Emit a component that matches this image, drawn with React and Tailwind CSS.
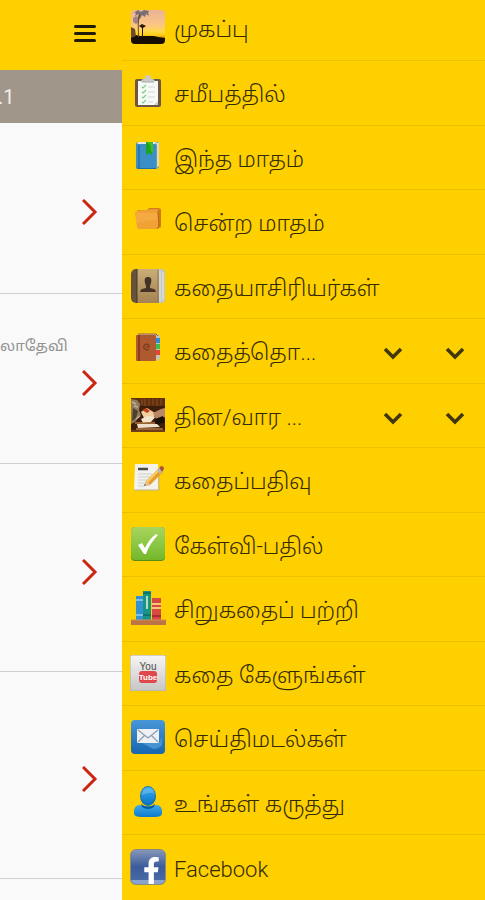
import React, { useState } from 'react';
import { FaFacebookF } from 'react-icons/fa';

const SunsetIcon = () => (
    <svg viewBox="0 0 36 36" className="size-9" aria-hidden="true">
        <defs>
            <linearGradient id="sunset" x1="0" y1="0" x2="0" y2="1">
                <stop offset="0" stopColor="#eab396" />
                <stop offset="0.45" stopColor="#fcc585" />
                <stop offset="0.62" stopColor="#ffd84a" />
                <stop offset="0.74" stopColor="#ffcf10" />
                <stop offset="0.82" stopColor="#d98a08" />
            </linearGradient>
            <clipPath id="sunsetClip"><rect x="1" y="1" width="34" height="34" rx="4" /></clipPath>
        </defs>
        <g clipPath="url(#sunsetClip)">
            <rect x="1" y="1" width="34" height="34" fill="url(#sunset)" />
            <path d="M1 28l5-2 4 1 4 0 5 0 5 0 4 1 7 1v9H1z" fill="#170d02" />
            <path d="M4 4l4-3 3 2 3-2 5 1-1 2 1 3-3-2-1 3-3-2-2 4-2-1 1-4-4 2 1-3z" fill="#7b6f73" />
            <path d="M3 9l3-2 3 2v4l-3 2-3-2z" fill="#a38781" />
            <path d="M9 5c-2 7-1 14-1 23h1c0-9-1-15 1-22z" fill="#5e4233" />
            <path d="M9 17l3-2 4 2-3 2v9h-1v-9z" fill="#2b1708" />
            <path d="M1 18l4 2 1 7-5 2z" fill="#6e4929" />
        </g>
    </svg>
);

const ClipboardIcon = () => (
    <svg viewBox="0 0 36 36" className="size-9" aria-hidden="true">
        <rect x="5" y="5" width="26" height="28" rx="2" fill="#6e5646" />
        <path d="M8 7h20v24H8z" fill="#f7f9f5" />
        <path d="M24 31l4-4v4z" fill="#cfcfc8" />
        <path d="M15 5q0-4 3-4t3 4h1q3 0 3 3H11q0-3 3-3z" fill="#c8cbca" />
        <path d="M12 8h12" stroke="#a5aaa8" strokeWidth="1" />
        <path d="M12 13l1 1 3-3M12 18l1 1 3-3M12 23l1 1 3-3M12 28l1 1 3-3" stroke="#7dcf87" strokeWidth="1.2" fill="none" />
        <path d="M18 13h7M18 18h7M18 23h7M18 28h5" stroke="#d3d7da" strokeWidth="1.2" />
    </svg>
);

const BlueBookIcon = () => (
    <svg viewBox="0 0 36 36" className="size-9" aria-hidden="true">
        <path d="M9 3h20v25l-3 2H8q-2 0-2-2V6q0-3 3-3z" fill="#1f6fa8" />
        <path d="M26 4l3-1v24l-3 3z" fill="#d5dcd5" />
        <path d="M6 5h20v24H8l-2-1z" fill="#3b8fc7" />
        <path d="M8 3h19l-2 2H7z" fill="#e3e8e2" />
        <path d="M26 6l1-1v24l-1 1z" fill="#7e9298" />
        <path d="M9 6v23" stroke="#286f9f" strokeWidth="1.5" />
        <path d="M16 3h6v13l-3-2-3 2z" fill="#1aa51d" />
        <path d="M17 3h6v11l-2-2-1-6z" fill="#45bd22" />
    </svg>
);

const FolderIcon = () => (
    <svg viewBox="0 0 36 36" className="size-9" aria-hidden="true">
        <path d="M7 9q0-2 2-2h8l2-2h9q3 0 3 2v16q0 2-2 2H9z" fill="#d47a16" />
        <path d="M9 7h8l2-1h9l1 3H9z" fill="#e89a35" />
        <path d="M5 10q0-2 2-2h19q2 0 2 2v14q0 2-2 2H9q-2 0-2-2z" fill="#f2a135" />
        <path d="M6 10h21v7q-10 0-21 3z" fill="#f7ad48" opacity="0.7" />
        <path d="M28 8l1 15-2 3" stroke="#b96914" fill="none" />
    </svg>
);

const ContactsIcon = () => (
    <svg viewBox="0 0 36 36" className="size-9" aria-hidden="true">
        <defs>
            <linearGradient id="cover" x1="0" y1="0" x2="0" y2="1">
                <stop offset="0" stopColor="#c9ad77" />
                <stop offset="1" stopColor="#a58352" />
            </linearGradient>
        </defs>
        <rect x="1" y="1" width="34" height="34" rx="5" fill="#66513c" />
        <path d="M7 1h22v34H7z" fill="url(#cover)" />
        <path d="M7 1v34" stroke="#42382a" />
        <path d="M29 1h2q4 0 4 4v26q0 4-4 4h-2z" fill="#c4c8c5" />
        <path d="M30 3v30M33 4v28" stroke="#e4e6e1" strokeWidth="1" />
        <path d="M28 2v32" stroke="#8d7757" strokeWidth="1" />
        <path d="M18 9c-3 0-4 2-3 6l1 3v2l-4 1q-2 1-2 3h16q0-2-2-3l-4-1v-2l1-3c1-4 0-6-3-6z" fill="#453426" />
    </svg>
);

const AddressBookIcon = () => (
    <svg viewBox="0 0 36 36" className="size-9" aria-hidden="true">
        <path d="M9 2h18l3 2v22l-3 3H9z" fill="#c7c3b5" />
        <rect x="26" y="6" width="4" height="5" fill="#2c8ed8" />
        <rect x="26" y="12" width="4" height="5" fill="#42b853" />
        <rect x="26" y="18" width="4" height="5" fill="#e04735" />
        <rect x="6" y="3" width="20" height="26" rx="1" fill="#af5930" />
        <path d="M9 3v26" stroke="#823517" strokeWidth="1.5" />
        <path d="M8 2h18l2 2" stroke="#9a5f40" fill="none" />
        <path d="M19 17c-2 2-6 0-5-3s6-2 5 1h-3" stroke="#7f401f" fill="none" strokeWidth="1.5" />
    </svg>
);

const LibraryIcon = () => (
    <svg viewBox="0 0 36 36" className="size-9" aria-hidden="true">
        <rect x="1" y="1" width="34" height="34" fill="#3d1e0b" />
        <path d="M1 1h34v8H1z" fill="#5f2f10" />
        <path d="M12 2v6M15 2v7M19 2v6M23 2v6M27 2v7M31 2v6" stroke="#7d451b" strokeWidth="1.5" />
        <path d="M1 2l6 1 3 4-1 6 2 5-6 7-4 2z" fill="#8f7a60" />
        <path d="M3 11l5 3-2 7-4 3" fill="#4f4029" />
        <path d="M2 5l4 2M4 9l4 1M6 22l4-3" stroke="#c1af95" strokeWidth="1.5" />
        <path d="M11 15l6-4 8 5-1 6-10-1z" fill="#f0cfa2" />
        <path d="M12 13l4-2 4 3-3 2z" fill="#c53d19" />
        <path d="M23 16l8-4 4-1v9l-9 2z" fill="#b98867" />
        <path d="M11 22l7-3 7 1-4 5-8 1z" fill="#f3e4cd" />
        <path d="M25 22l8-3 2 6-9 3z" fill="#180e0a" />
        <path d="M7 27l20 0 3 3-22 1z" fill="#efe0c9" />
        <path d="M5 26h20M6 32h27" stroke="#b87a40" strokeWidth="1.5" />
        <path d="M1 33h34v2H1z" fill="#6c3c1b" />
    </svg>
);

const NoteIcon = () => (
    <svg viewBox="0 0 36 36" className="size-9" aria-hidden="true">
        <path d="M5 3h23v26H4z" fill="#f3f2eb" />
        <path d="M4 29h25V12" stroke="#bcb397" fill="none" strokeWidth="1" />
        <path d="M8 8h10" stroke="#4b4b4b" strokeWidth="2.5" />
        <path d="M8 13h14M8 16h13M8 19h9M8 22h7M8 25h6" stroke="#cccfd1" strokeWidth="1.2" />
        <path d="M14 25l2-5L29 7l4 4-13 13z" fill="#e79c29" />
        <path d="M16 20L29 7l2 1-13 14z" fill="#f9cb60" />
        <path d="M29 7l2-2q3 0 3 3l-2 3z" fill="#a8543e" />
        <path d="M27 9l2-2 3 4-2 2z" fill="#b9b9b9" />
        <path d="M14 25l2-5 2 2 2 2z" fill="#e5c29a" />
        <path d="M14 25l1-2 1 1z" fill="#333" />
    </svg>
);

const CheckIcon = () => (
    <svg viewBox="0 0 36 36" className="size-9" aria-hidden="true">
        <defs>
            <linearGradient id="green" x1="0" y1="0" x2="0" y2="1">
                <stop offset="0" stopColor="#a9d45c" />
                <stop offset="0.5" stopColor="#8bc846" />
                <stop offset="1" stopColor="#75b62a" />
            </linearGradient>
        </defs>
        <rect x="1" y="1" width="34" height="34" rx="4" fill="#568c17" />
        <rect x="1" y="1" width="34" height="33" rx="4" fill="url(#green)" />
        <path d="M8 19l4-2 3 5q4-9 11-14l2 1Q20 17 16 28h-2z" fill="#fff" />
    </svg>
);

const ShelfIcon = () => (
    <svg viewBox="0 0 36 36" className="size-9" aria-hidden="true">
        <rect x="6" y="6" width="8" height="24" fill="#3293d0" />
        <path d="M6 10h8M6 25h8" stroke="#7bc2e6" strokeWidth="2" />
        <rect x="22" y="8" width="9" height="22" fill="#d94943" />
        <path d="M22 14h9M22 18h9" stroke="#f5c877" strokeWidth="2" />
        <path d="M22 26h9" stroke="#a92e32" strokeWidth="2" />
        <rect x="13" y="1" width="8" height="29" fill="#189486" />
        <path d="M17 6v13" stroke="#b2dfc2" strokeWidth="2" />
        <path d="M13 3h8M13 25h8" stroke="#0d6b69" strokeWidth="1.5" />
        <path d="M1 30h35v5H1z" fill="#bd7445" />
        <path d="M1 30h35" stroke="#d08e5c" strokeWidth="1" />
    </svg>
);

const YouTubeIcon = () => (
    <svg viewBox="0 0 36 36" className="size-9" aria-hidden="true">
        <defs>
            <linearGradient id="silver" x1="0" y1="0" x2="0" y2="1">
                <stop offset="0" stopColor="#f7f6f4" />
                <stop offset="1" stopColor="#c8c6c5" />
            </linearGradient>
        </defs>
        <rect x="0" y="0" width="36" height="36" rx="2" fill="url(#silver)" stroke="#b4aaa0" />
        <text x="18" y="15" textAnchor="middle" fontFamily="Liberation Sans Narrow, Liberation Sans, sans-serif" fontSize="10" fill="#4a4a4a">You</text>
        <rect x="9" y="16" width="18" height="12" rx="3" fill="#e0474a" />
        <text x="18" y="25" textAnchor="middle" fontFamily="Liberation Sans Narrow, Liberation Sans, sans-serif" fontSize="8" fontWeight="bold" fill="#fff">Tube</text>
    </svg>
);

const MailIcon = () => (
    <svg viewBox="0 0 36 36" className="size-9" aria-hidden="true">
        <defs>
            <linearGradient id="mail" x1="0" y1="0" x2="0" y2="1">
                <stop offset="0" stopColor="#4797d8" />
                <stop offset="1" stopColor="#1765b0" />
            </linearGradient>
        </defs>
        <rect x="1" y="1" width="34" height="34" rx="4" fill="url(#mail)" />
        <path d="M12 24h17l3-6v8q-3 4-9 4z" fill="#6cb2e3" opacity="0.5" />
        <rect x="7" y="10" width="22" height="14" rx="1" fill="#edf1f6" />
        <path d="M8 11l10 8 10-8M8 23l7-7M28 23l-7-7" stroke="#8f9bad" fill="none" strokeWidth="1.2" />
    </svg>
);

const PersonIcon = () => (
    <svg viewBox="0 0 36 36" className="size-9" aria-hidden="true">
        <defs>
            <linearGradient id="person" x1="0" y1="0" x2="0" y2="1">
                <stop offset="0" stopColor="#3faae8" />
                <stop offset="1" stopColor="#0a7ccd" />
            </linearGradient>
        </defs>
        <path d="M4 30q-1-9 6-9 8 3 16 0 7 0 6 9-1 3-7 3H11q-6 0-7-3z" fill="url(#person)" />
        <path d="M11 20q7 5 14 0l-1 3q-6 4-12 0z" fill="#075e9f" />
        <ellipse cx="18" cy="12" rx="8" ry="10" fill="#1476b9" />
        <ellipse cx="18" cy="11" rx="7" ry="8" fill="url(#person)" />
        <path d="M12 11q0-7 6-7t6 5q-5-1-12 2z" fill="#78c9f1" opacity="0.5" />
    </svg>
);

const FacebookIcon = () => (
    <span className="relative flex size-9 items-end justify-end overflow-hidden rounded-md border border-[#8b8c7b] bg-linear-to-b from-[#8796b9] via-[#3c5b9b] to-[#4d6ca9]">
        <span className="absolute inset-x-0 bottom-0 h-1 bg-[#8ba4ce]" />
        <FaFacebookF size={27} className="relative text-white" aria-hidden="true" />
    </span>
);

const Chevron = () => (
    <svg viewBox="0 0 20 14" className="h-3.5 w-5" fill="none" stroke="#40370c" strokeWidth="3.5" aria-hidden="true">
        <path d="M2 2l8 8 8-8" />
    </svg>
);

const menuItems = [
    { label: 'முகப்பு', icon: SunsetIcon },
    { label: 'சமீபத்தில்', icon: ClipboardIcon },
    { label: 'இந்த மாதம்', icon: BlueBookIcon },
    { label: 'சென்ற மாதம்', icon: FolderIcon },
    { label: 'கதையாசிரியர்கள்', icon: ContactsIcon },
    { label: 'கதைத்தொ...', icon: AddressBookIcon, expandable: true },
    { label: 'தின/வார ...', icon: LibraryIcon, expandable: true },
    { label: 'கதைப்பதிவு', icon: NoteIcon },
    { label: 'கேள்வி-பதில்', icon: CheckIcon },
    { label: 'சிறுகதைப் பற்றி', icon: ShelfIcon },
    { label: 'கதை கேளுங்கள்', icon: YouTubeIcon },
    { label: 'செய்திமடல்கள்', icon: MailIcon },
    { label: 'உங்கள் கருத்து', icon: PersonIcon },
    { label: 'Facebook', icon: FacebookIcon },
];

const stories = [
    { id: 1, height: 'h-[171px]' },
    { id: 2, height: 'h-[170px]', author: 'லாதேவி' },
    { id: 3, height: 'h-[208px]' },
    { id: 4, height: 'h-[207px]' },
];

const MenuRow = ({ item }) => {
    const [open, setOpen] = useState(false);
    const Icon = item.icon;

    return (
        <li className="flex h-16 items-center border-b border-[#eebf00] pb-0.5 pl-2 first:h-[61px] first:pb-1.5 last:border-b-0 even:h-[65px]">
            <a href="#" className="flex min-w-0 flex-1 items-center gap-2 whitespace-nowrap">
                <span className="shrink-0">
                    <Icon />
                </span>
                <span className="pt-1.5">{item.label}</span>
            </a>
            {item.expandable && (
                <div className="flex gap-[42px] pt-2 pr-5">
                    <button type="button" aria-label="Expand" aria-expanded={open} onClick={() => setOpen(!open)}>
                        <Chevron />
                    </button>
                    <button type="button" aria-label="Expand all" aria-expanded={open} onClick={() => setOpen(!open)}>
                        <Chevron />
                    </button>
                </div>
            )}
        </li>
    );
};

const App = () => (
    <div className="flex min-h-screen overflow-hidden bg-[#f9f9f9] font-[Roboto,'Noto_Sans_Tamil','Noto_Sans',sans-serif]">
        <main className="w-[122px] shrink-0 overflow-hidden">
            <header className="flex h-[70px] items-center justify-end bg-[#ffd000] pr-[26px]">
                <button type="button" aria-label="Menu" className="flex w-[22px] flex-col gap-1 pb-1">
                    <span className="h-[3px] rounded-full bg-[#211c08]" />
                    <span className="h-[3px] rounded-full bg-[#211c08]" />
                    <span className="h-[3px] rounded-full bg-[#211c08]" />
                </button>
            </header>
            <div className="flex h-[53px] items-center bg-[#a0968a] text-xl text-[#f1eeea]">
                <span className="-ml-0.5">.1</span>
            </div>
            {stories.map((story) => (
                <article key={story.id} className={`flex border-b border-[#cdcfd0] ${story.height}`}>
                    <a href="#" aria-label="Read story" className="grid min-w-0 flex-1 grid-rows-[1fr_auto_1fr] pt-2 pr-6">
                        <span className="self-end justify-self-start pb-3 text-[15px] whitespace-nowrap text-[#939393]">{story.author}</span>
                        <svg viewBox="0 0 16 26" className="h-[26px] w-4 justify-self-end" fill="none" stroke="#cc2411" strokeWidth="3" aria-hidden="true">
                            <path d="M1 1l12 12L1 25" />
                        </svg>
                    </a>
                </article>
            ))}
        </main>

        <nav className="min-w-0 flex-1 bg-[#ffd000] text-[22px] leading-8 font-light text-[#332b06]">
            <ul>
                {menuItems.map((item) => (
                    <MenuRow key={item.label} item={item} />
                ))}
            </ul>
        </nav>
    </div>
);

export default App;
